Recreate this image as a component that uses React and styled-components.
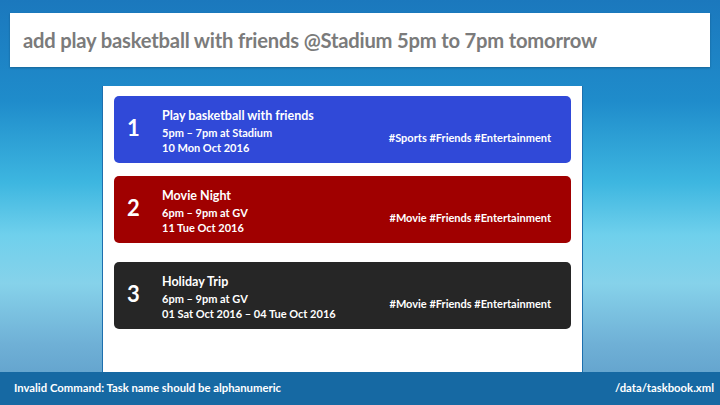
import React from "react";
import styled, { createGlobalStyle } from "styled-components";

const Global = createGlobalStyle`
  html, body { margin: 0; padding: 0; }
  body { font-family: Lato, "Open Sans", sans-serif; }
  #root { width: 720px; height: 405px; }
`;

const Screen = styled.div`
  width: 720px;
  height: 405px;
  display: flex;
  flex-direction: column;
  overflow: hidden;
  background: linear-gradient(180deg, #1b78bd 0%, #1f8ccb 25%, #3db6e0 45%, #6fd0ec 58%, #86d2ea 70%, #6fb0d6 85%, #5a99c6 100%);
`;

const CommandBar = styled.div`
  margin: 13px 10px 0 10px;
  height: 54px;
  background: #ffffff;
  display: flex;
  align-items: center;
  padding-left: 13px;
  box-shadow: 0 1px 2px rgba(0, 0, 0, 0.25);
  font-weight: 700;
  font-size: 20.2px;
  color: #7b7b7b;
  letter-spacing: -0.2px;
`;

const Panel = styled.div`
  flex: 1;
  margin: 19px 0 0 102px;
  width: 481px;
  background: #ffffff;
  border-left: 1px solid #1d6fae;
  border-right: 1px solid #1d6fae;
  box-sizing: border-box;
  padding: 10px 11px 0 11px;
  display: flex;
  flex-direction: column;
`;

const Card = styled.div`
  height: 67px;
  margin-top: ${(p) => p.$gap}px;
  border-radius: 5px;
  background: ${(p) => p.$bg};
  color: #ffffff;
  display: flex;
  align-items: center;
  padding: 0 20px 0 13px;
  font-weight: 700;
`;

const Num = styled.div`
  width: 35px;
  font-size: 22px;
  line-height: 1;
  margin-top: -4px;
`;

const Info = styled.div`
  flex: 1;
  display: flex;
  flex-direction: column;
  margin-top: 4px;
`;

const Title = styled.div`
  font-size: 12.5px;
  line-height: 16px;
  margin-bottom: 1px;
`;

const Line = styled.div`
  font-size: 11px;
  line-height: 15px;
`;

const Tags = styled.div`
  font-size: 11px;
  margin-top: 15px;
`;

const Footer = styled.div`
  height: 33px;
  background: #1669a3;
  color: #ffffff;
  display: flex;
  align-items: center;
  justify-content: space-between;
  padding: 0 6px 2px 14px;
  box-sizing: border-box;
  font-size: 11.3px;
  font-weight: 700;
`;

const tasks = [
  {
    n: 1,
    title: "Play basketball with friends",
    time: "5pm – 7pm at Stadium",
    date: "10 Mon Oct 2016",
    tags: "#Sports #Friends #Entertainment",
    bg: "#3049d8",
    gap: 0,
  },
  {
    n: 2,
    title: "Movie Night",
    time: "6pm – 9pm at GV",
    date: "11 Tue Oct 2016",
    tags: "#Movie #Friends #Entertainment",
    bg: "#a00000",
    gap: 13,
  },
  {
    n: 3,
    title: "Holiday Trip",
    time: "6pm – 9pm at GV",
    date: "01 Sat Oct 2016 – 04 Tue Oct 2016",
    tags: "#Movie #Friends #Entertainment",
    bg: "#262626",
    gap: 19,
  },
];

export default function App() {
  return (
    <>
      <Global />
      <Screen>
        <CommandBar>add play basketball with friends @Stadium 5pm to 7pm tomorrow</CommandBar>
        <Panel>
          {tasks.map((t) => (
            <Card key={t.n} $bg={t.bg} $gap={t.gap}>
              <Num>{t.n}</Num>
              <Info>
                <Title>{t.title}</Title>
                <Line>{t.time}</Line>
                <Line>{t.date}</Line>
              </Info>
              <Tags>{t.tags}</Tags>
            </Card>
          ))}
        </Panel>
        <Footer>
          <span>Invalid Command: Task name should be alphanumeric</span>
          <span>/data/taskbook.xml</span>
        </Footer>
      </Screen>
    </>
  );
}
